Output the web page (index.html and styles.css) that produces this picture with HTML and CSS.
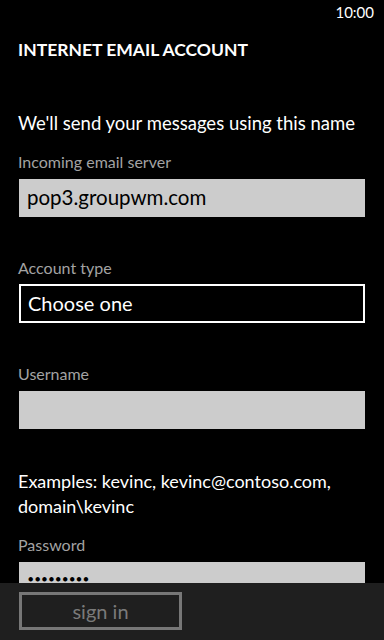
FILE: index.html
```html
<!DOCTYPE html>
<html lang="en">

<head>
    <meta charset="UTF-8">
    <meta name="viewport" content="width=device-width, initial-scale=1.0">
    <title>Internet Email Account</title>
    <link rel="stylesheet" href="styles.css">
</head>

<body>

    <div class="status-bar">
        <span class="clock">10:00</span>
    </div>

    <div class="page">
        <h1 class="page-title">INTERNET EMAIL ACCOUNT</h1>

        <p class="intro">We'll send your messages using this name</p>

        <div class="field">
            <label class="field-label">Incoming email server</label>
            <div class="textbox">pop3.groupwm.com</div>
        </div>

        <div class="field">
            <label class="field-label">Account type</label>
            <div class="picker">Choose one</div>
        </div>

        <div class="field">
            <label class="field-label">Username</label>
            <div class="textbox"></div>
        </div>

        <p class="hint">Examples: kevinc, kevinc@contoso.com, domain\kevinc</p>

        <div class="field">
            <label class="field-label">Password</label>
            <div class="textbox password">&#9679;&#9679;&#9679;&#9679;&#9679;&#9679;&#9679;&#9679;&#9679;</div>
        </div>
    </div>

    <div class="app-bar">
        <button class="app-button">sign in</button>
    </div>

</body>

</html>
```

FILE: styles.css
```css
body {
    margin: 0;
    width: 384px;
    height: 640px;
    overflow: hidden;
    background-color: #000;
    color: #fff;
    font-family: 'Lato', 'Open Sans', sans-serif;
}

.status-bar {
    height: 25px;
    display: flex;
    justify-content: flex-end;
    align-items: center;
    padding-right: 10px;
}

.clock {
    font-size: 15px;
    margin-top: -2px;
}

.page {
    padding: 0 19px;
}

.page-title {
    margin: 12px 0 0 -1px;
    font-size: 17.5px;
    font-weight: 700;
    line-height: 26px;
}

.intro {
    margin: 47px 0 0 -1px;
    font-size: 18.5px;
    line-height: 26px;
}

.field {
    margin-top: 16px;
}

.field-label {
    display: block;
    color: #a3a3a3;
    font-size: 16px;
    line-height: 20px;
    margin-left: -1px;
}

.textbox {
    margin-top: 7px;
    height: 38px;
    background-color: #cccccc;
    color: #000;
    font-size: 20.5px;
    line-height: 36px;
    padding: 0 8px;
}

.picker {
    margin-top: 6px;
    height: 35px;
    border: 2px solid #fff;
    font-size: 20px;
    line-height: 34px;
    padding: 0 7px;
}

.field + .field {
    margin-top: 41px;
}

.hint {
    margin: 40px 0 0 -1px;
    font-size: 18px;
    line-height: 25px;
    padding-right: 20px;
}

.hint + .field {
    margin-top: 16px;
}

.password {
    font-size: 9px;
    letter-spacing: 1.5px;
    line-height: 34px;
    padding-left: 9px;
}

.app-bar {
    position: fixed;
    left: 0;
    bottom: 0;
    width: 100%;
    height: 57px;
    background-color: #1f1f1f;
    padding: 9px 19px 0;
    box-sizing: border-box;
}

.app-button {
    width: 163px;
    height: 38px;
    background: transparent;
    border: 3px solid #777;
    color: #7a7a7a;
    font-family: inherit;
    font-size: 20px;
    padding: 0;
    line-height: 30px;
}
```
